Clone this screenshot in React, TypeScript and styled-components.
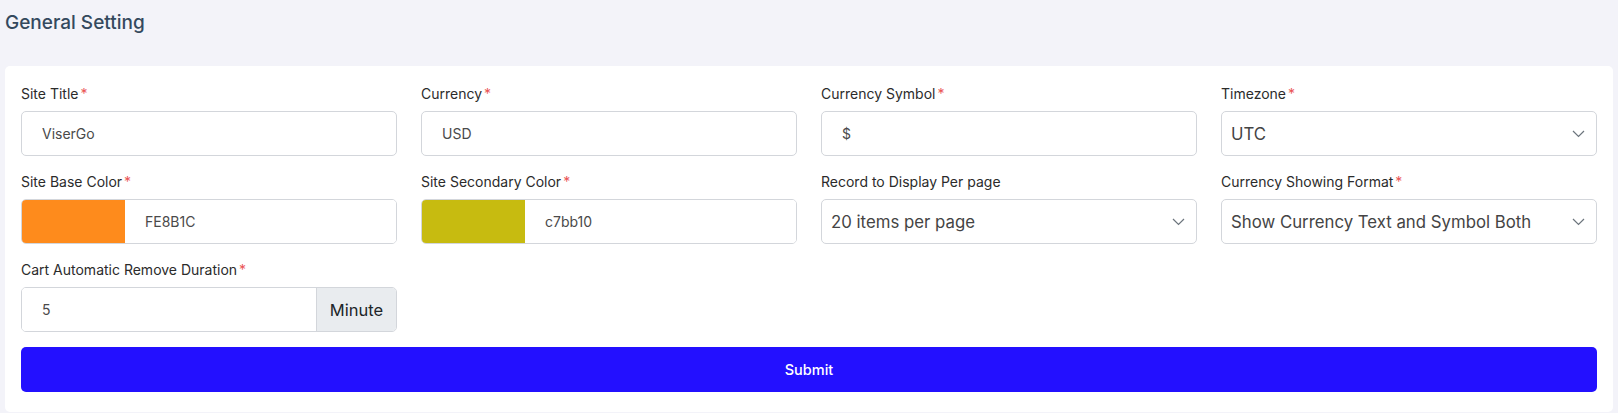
import {FC} from "react";
import styled, {createGlobalStyle} from 'styled-components'

const GlobalStyle = createGlobalStyle`
  body {
    margin: 0;
    background: #f3f3f9;
    font-family: Inter, "Open Sans", sans-serif;
  }
`

const Required: FC = () => <Star>*</Star>

const Chevron: FC = () => (
    <ChevronIcon width="13" height="8" viewBox="0 0 13 8">
        <polyline points="1,1 6.5,6.5 12,1" fill="none" stroke="#6c757d" strokeWidth="1.2"/>
    </ChevronIcon>
)

const TextField: FC<{ label: string, value: string, required?: boolean }> = ({label, value, required = true}) => (
    <Field>
        <Label>{label}{required && <Required/>}</Label>
        <Input defaultValue={value}/>
    </Field>
)

const SelectField: FC<{ label: string, value: string, required?: boolean }> = ({label, value, required = true}) => (
    <Field>
        <Label>{label}{required && <Required/>}</Label>
        <SelectWrap>
            <Select defaultValue={value}>
                <option value={value}>{value}</option>
            </Select>
            <Chevron/>
        </SelectWrap>
    </Field>
)

const ColorField: FC<{ label: string, color: string, value: string }> = ({label, color, value}) => (
    <Field>
        <Label>{label}<Required/></Label>
        <Group>
            <Swatch color={color}/>
            <GroupInput defaultValue={value}/>
        </Group>
    </Field>
)

export default function App() {
    return (
        <Page>
            <GlobalStyle/>
            <Heading>General Setting</Heading>
            <Card>
                <Grid>
                    <TextField label="Site Title" value="ViserGo"/>
                    <TextField label="Currency" value="USD"/>
                    <TextField label="Currency Symbol" value="$"/>
                    <SelectField label="Timezone" value="UTC"/>

                    <ColorField label="Site Base Color" color="#fe8b1c" value="FE8B1C"/>
                    <ColorField label="Site Secondary Color" color="#c7bb10" value="c7bb10"/>
                    <SelectField label="Record to Display Per page" value="20 items per page" required={false}/>
                    <SelectField label="Currency Showing Format" value="Show Currency Text and Symbol Both"/>

                    <Field>
                        <Label>Cart Automatic Remove Duration<Required/></Label>
                        <Group>
                            <GroupInput defaultValue="5"/>
                            <Addon>Minute</Addon>
                        </Group>
                    </Field>
                </Grid>
                <Submit type="button">Submit</Submit>
            </Card>
        </Page>
    )
}

const Page = styled.div`
  padding: 11px 5px 0;
`

const Heading = styled.h4`
  margin: 0 0 31px;
  font-size: 19px;
  line-height: 24px;
  font-weight: 500;
  color: #34495e;
`

const Card = styled.div`
  background: white;
  border-radius: 5px;
  padding: 18px 16px 20px;
  min-height: 340px;
  box-sizing: border-box;
`

const Grid = styled.div`
  display: grid;
  grid-template-columns: repeat(4, 1fr);
  gap: 16px 24px;
`

const Field = styled.div`
  display: flex;
  flex-direction: column;
`

const Label = styled.label`
  font-size: 14px;
  line-height: 20px;
  font-weight: 400;
  color: #2b2b2b;
  margin-bottom: 7px;
`

const Star = styled.span`
  color: #ea5455;
  margin-left: 2px;
`

const Input = styled.input`
  box-sizing: border-box;
  height: 45px;
  width: 100%;
  padding: 0 20px;
  border: 1px solid #d3d6db;
  border-radius: 5px;
  font-family: inherit;
  font-size: 14px;
  color: #4a4a4a;
  background: white;
  outline: none;
`

const SelectWrap = styled.div`
  position: relative;
`

const Select = styled.select`
  box-sizing: border-box;
  appearance: none;
  height: 45px;
  width: 100%;
  padding: 0 36px 0 9px;
  border: 1px solid #d3d6db;
  border-radius: 5px;
  font-family: inherit;
  font-size: 16.8px;
  color: #444;
  background: white;
  outline: none;
`

const ChevronIcon = styled.svg`
  position: absolute;
  right: 12px;
  top: 19px;
  pointer-events: none;
`

const Group = styled.div`
  display: flex;
  height: 45px;
  border: 1px solid #d3d6db;
  border-radius: 5px;
  overflow: hidden;
  box-sizing: border-box;
`

const Swatch = styled.div<{ color: string }>`
  width: 104px;
  flex-shrink: 0;
  background: ${({color}) => color};
  margin: -1px 0 -1px -1px;
`

const GroupInput = styled.input`
  flex: 1;
  min-width: 0;
  border: none;
  padding: 0 20px;
  font-family: inherit;
  font-size: 14px;
  color: #4a4a4a;
  outline: none;
`

const Addon = styled.span`
  display: flex;
  align-items: center;
  width: 80px;
  box-sizing: border-box;
  justify-content: center;
  background: #e9ecef;
  border-left: 1px solid #d3d6db;
  font-size: 16.5px;
  color: #212529;
`

const Submit = styled.button`
  display: block;
  width: 100%;
  height: 45px;
  margin-top: 15px;
  border: none;
  border-radius: 5px;
  background: #2310ff;
  color: white;
  font-family: inherit;
  font-size: 14.5px;
  font-weight: 500;
`
